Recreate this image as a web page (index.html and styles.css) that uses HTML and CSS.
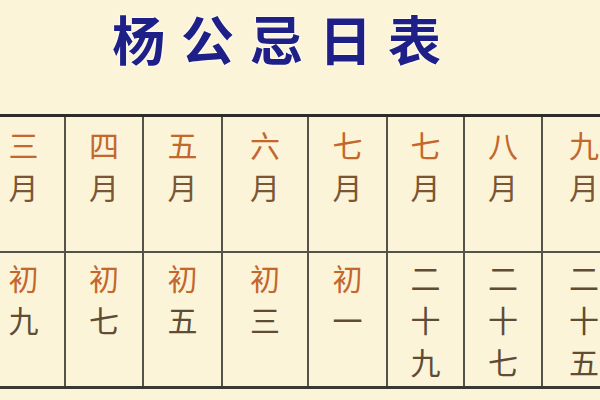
FILE: index.html
```html
<!DOCTYPE html>
<html lang="zh">
<head>
<meta charset="utf-8">
<link rel="stylesheet" href="styles.css">
</head>
<body>
<div class="page">
  <header class="head">
    <h1 class="title">杨公忌日表</h1>
  </header>
  <div class="table">
    <div class="cell"><span class="hi">三</span><span class="lo">月</span></div>
    <div class="cell"><span class="hi">四</span><span class="lo">月</span></div>
    <div class="cell"><span class="hi">五</span><span class="lo">月</span></div>
    <div class="cell"><span class="hi">六</span><span class="lo">月</span></div>
    <div class="cell"><span class="hi">七</span><span class="lo">月</span></div>
    <div class="cell"><span class="hi">七</span><span class="lo">月</span></div>
    <div class="cell"><span class="hi">八</span><span class="lo">月</span></div>
    <div class="cell"><span class="hi">九</span><span class="lo">月</span></div>

    <div class="cell day"><span class="hi">初</span><span class="lo">九</span></div>
    <div class="cell day"><span class="hi">初</span><span class="lo">七</span></div>
    <div class="cell day"><span class="hi">初</span><span class="lo">五</span></div>
    <div class="cell day"><span class="hi">初</span><span class="lo">三</span></div>
    <div class="cell day"><span class="hi">初</span><span class="lo">一</span></div>
    <div class="cell day"><span class="lo">二</span><span class="lo">十</span><span class="lo">九</span></div>
    <div class="cell day"><span class="lo">二</span><span class="lo">十</span><span class="lo">七</span></div>
    <div class="cell day"><span class="lo">二</span><span class="lo">十</span><span class="lo">五</span></div>
  </div>
</div>
</body>
</html>
```
FILE: styles.css
```css
html, body {
  margin: 0;
  padding: 0;
  background: #fcf4d8;
}
body {
  width: 600px;
  height: 400px;
  overflow: hidden;
  font-family: "Noto Sans CJK SC", "Noto Sans CJK TC", sans-serif;
}
.page {
  width: 600px;
  height: 400px;
  overflow: hidden;
}
.head {
  height: 114px;
  box-sizing: border-box;
  padding: 0 0 0 112px;
  display: flex;
  align-items: flex-start;
}
.title {
  margin: 0;
  font-size: 53px;
  line-height: normal;
  font-weight: 700;
  letter-spacing: 16px;
  color: #1e2088;
  text-shadow: 0 0 2px #ffffff, 0 0 3px #ffffff;
}
.table {
  margin-left: -17px;
  width: 642px;
  display: grid;
  grid-template-columns: 81px 76px 77px 84px 77px 75px 76px 82px;
  grid-template-rows: 134px 133px;
  gap: 2px;
  background: #55524a;
  border-top: 3px solid #2e2c28;
  border-bottom: 3px solid #3a3832;
}
.cell {
  background: #fcf4d8;
  display: flex;
  flex-direction: column;
  align-items: center;
  padding-top: 6px;
  font-size: 30px;
  line-height: 42px;
}
.cell.day {
  padding-top: 3px;
}
.hi {
  color: #c4672c;
}
.lo {
  color: #7a5634;
}
.day .lo {
  color: #5e4c34;
}
```
